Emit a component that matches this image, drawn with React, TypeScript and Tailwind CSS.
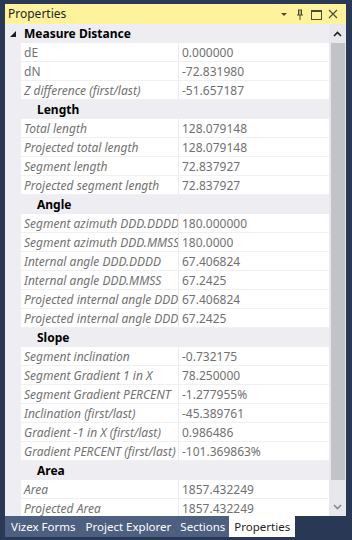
import React from "react";

type Row =
  | { kind: "cat"; label: string; top?: boolean }
  | { kind: "prop"; label: string; value: string; plain?: boolean };

const rows: Row[] = [
  { kind: "cat", label: "Measure Distance", top: true },
  { kind: "prop", label: "dE", value: "0.000000", plain: true },
  { kind: "prop", label: "dN", value: "-72.831980", plain: true },
  { kind: "prop", label: "Z difference (first/last)", value: "-51.657187" },
  { kind: "cat", label: "Length" },
  { kind: "prop", label: "Total length", value: "128.079148" },
  { kind: "prop", label: "Projected total length", value: "128.079148" },
  { kind: "prop", label: "Segment length", value: "72.837927" },
  { kind: "prop", label: "Projected segment length", value: "72.837927" },
  { kind: "cat", label: "Angle" },
  { kind: "prop", label: "Segment azimuth DDD.DDDD", value: "180.000000" },
  { kind: "prop", label: "Segment azimuth DDD.MMSS", value: "180.0000" },
  { kind: "prop", label: "Internal angle DDD.DDDD", value: "67.406824" },
  { kind: "prop", label: "Internal angle DDD.MMSS", value: "67.2425" },
  { kind: "prop", label: "Projected internal angle DDD.DDDD", value: "67.406824" },
  { kind: "prop", label: "Projected internal angle DDD.MMSS", value: "67.2425" },
  { kind: "cat", label: "Slope" },
  { kind: "prop", label: "Segment inclination", value: "-0.732175" },
  { kind: "prop", label: "Segment Gradient 1 in X", value: "78.250000" },
  { kind: "prop", label: "Segment Gradient PERCENT", value: "-1.277955%" },
  { kind: "prop", label: "Inclination (first/last)", value: "-45.389761" },
  { kind: "prop", label: "Gradient -1 in X (first/last)", value: "0.986486" },
  { kind: "prop", label: "Gradient PERCENT (first/last)", value: "-101.369863%" },
  { kind: "cat", label: "Area" },
  { kind: "prop", label: "Area", value: "1857.432249" },
  { kind: "prop", label: "Projected Area", value: "1857.432249" },
];

export default function App() {
  return (
    <div
      className="w-[352px] h-[540px] bg-[#293955] flex flex-col pt-[4px] pb-[3px] overflow-hidden"
      style={{ fontFamily: '"Noto Sans", "Open Sans", sans-serif' }}
    >
      {/* title bar */}
      <div className="ml-[5px] mr-[6px] h-[20px] bg-[#fff29d] flex items-center pl-[3px] pr-[8px] shrink-0">
        <span className="text-[12px] text-[#1e1e1e] leading-none">Properties</span>
        <div className="ml-auto flex items-center gap-[6px]">
          <svg width="10" height="10" viewBox="0 0 10 10">
            <path d="M2 4h6l-3 3z" fill="#4a4a35" />
          </svg>
          <svg width="10" height="11" viewBox="0 0 10 11">
            <path d="M3 1h4M3.5 1v5M6.5 1v5M2 6h6M5 6v5" stroke="#4a4a35" strokeWidth="1" fill="none" />
            <rect x="3.5" y="1" width="3" height="5" fill="#4a4a35" opacity="0.35" />
          </svg>
          <svg width="11" height="11" viewBox="0 0 11 11">
            <rect x="0.5" y="1.5" width="10" height="9" stroke="#4a4a35" fill="none" />
            <path d="M0.5 2.5h10" stroke="#4a4a35" />
          </svg>
          <svg width="10" height="10" viewBox="0 0 10 10">
            <path d="M1 1l8 8M9 1l-8 8" stroke="#4a4a35" strokeWidth="1.1" />
          </svg>
        </div>
      </div>

      {/* grid + scrollbar */}
      <div className="flex-1 min-h-0 ml-[5px] mr-[6px] flex bg-white">
        <div className="flex-1 min-w-0 overflow-hidden">
          {rows.map((r, i) =>
            r.kind === "cat" ? (
              <div key={i} className="h-[19px] bg-[#eeeef2] flex items-center pt-[1px]">
                <div className="w-[16px] shrink-0 flex items-center justify-center">
                  {r.top && (
                    <svg width="8" height="8" viewBox="0 0 8 8">
                      <path d="M1 7h6V1z" fill="#1e1e1e" />
                    </svg>
                  )}
                </div>
                <span
                  className={`text-[12px] font-bold text-black whitespace-nowrap ${r.top ? "pl-[3px]" : "pl-[16px]"}`}
                >
                  {r.label}
                </span>
              </div>
            ) : (
              <div key={i} className="h-[19px] flex bg-[#eeeef2]">
                <div className="w-[16px] shrink-0" />
                <div className="flex-1 flex bg-white border-b border-[#f0f0f3]">
                  <div
                    className={`w-[157px] shrink-0 overflow-hidden whitespace-nowrap pl-[3px] pt-[1px] text-[12px] leading-[17px] text-[#717171] ${r.plain ? "" : "italic"}`}
                  >
                    {r.label}
                  </div>
                  <div className="w-px bg-[#ececef] shrink-0" />
                  <div className="flex-1 pl-[3px] pt-[1px] text-[12px] leading-[17px] text-[#717171] whitespace-nowrap overflow-hidden">
                    {r.value}
                  </div>
                </div>
              </div>
            )
          )}
        </div>
        {/* scrollbar */}
        <div className="w-[17px] shrink-0 bg-[#e8e8ec] flex flex-col items-center">
          <div className="h-[19px] flex items-center justify-center shrink-0">
            <svg width="9" height="6" viewBox="0 0 9 6">
              <path d="M1 5l3.5-3.5L8 5" stroke="#1e1e1e" strokeWidth="1.6" fill="none" />
            </svg>
          </div>
          <div className="w-[14px] h-[437px] bg-[#c2c3c9] shrink-0" />
          <div className="flex-1" />
          <div className="h-[19px] flex items-center justify-center shrink-0">
            <svg width="9" height="6" viewBox="0 0 9 6">
              <path d="M1 1l3.5 3.5L8 1" stroke="#868999" strokeWidth="1.6" fill="none" />
            </svg>
          </div>
        </div>
      </div>

      {/* tabs */}
      <div className="h-[21px] shrink-0 ml-[5px] flex items-stretch text-[11.5px]">
        <div className="bg-[#4d6082] text-white pl-[6px] pr-[5px] flex items-center">Vizex Forms</div>
        <div className="bg-[#4d6082] text-white px-[5px] flex items-center">Project Explorer</div>
        <div className="bg-[#4d6082] text-white px-[4px] flex items-center">Sections</div>
        <div className="bg-white text-[#1e1e1e] px-[5px] flex items-center">Properties</div>
      </div>
    </div>
  );
}
